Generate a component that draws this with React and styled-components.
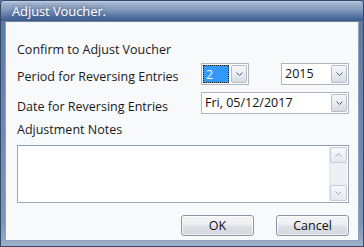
import React from "react";
import styled, { createGlobalStyle } from "styled-components";

const Global = createGlobalStyle`
  html, body { margin: 0; padding: 0; background: #5a76a0; }
  body { font-family: "Open Sans", "Noto Sans", sans-serif; }
`;

const Window = styled.div`
  width: 364px;
  height: 247px;
  display: flex;
  flex-direction: column;
  box-sizing: border-box;
  background: linear-gradient(to right, #3f5d8c 0%, #5a78a6 3%, #6f8bb4 50%, #5a78a6 97%, #3f5d8c 100%);
  border: 1px solid #34496b;
  border-radius: 4px 4px 0 0;
  overflow: hidden;
`;

const TitleBar = styled.div`
  height: 20px;
  flex: none;
  display: flex;
  align-items: center;
  padding-left: 11px;
  background: linear-gradient(to bottom, #c6d2e3 0px, #a3b4ce 2px, #8299bd 9px, #52709f 16px, #3d5c8e 20px);
  color: #ffffff;
  font-size: 13px;
  letter-spacing: -0.1px;
  text-shadow: 0 0 4px rgba(30, 50, 90, 0.8);
`;

const Frame = styled.div`
  flex: 1;
  display: flex;
  padding: 0 4px 5px 4px;
  background: linear-gradient(to bottom, #5d7aa6 0%, #7c95ba 90%, #9fb0c8 100%);
`;

const Client = styled.div`
  flex: 1;
  background: #f7f9fb;
  border: 1px solid #8fa1bb;
  border-top-color: #6c84a8;
  display: flex;
  flex-direction: column;
  padding: 19px 9px 0 10px;
  color: #1a1a1a;
  font-size: 12.5px;
`;

const Row = styled.div`
  display: grid;
  grid-template-columns: 184px 1fr;
  align-items: start;
  margin-top: ${(p) => p.$mt || 0}px;
  padding-left: 1px;
`;

const Label = styled.div`
  line-height: 16px;
  height: 16px;
  margin-top: ${(p) => p.$mt || 0}px;
  white-space: nowrap;
`;

const Controls = styled.div`
  display: flex;
  gap: 32px;
`;

const Select = styled.div`
  width: ${(p) => p.$w}px;
  height: 22px;
  box-sizing: border-box;
  border: 1px solid #aeb6c2;
  background: #ffffff;
  display: flex;
  align-items: center;
  padding: 1px;
  gap: 1px;
`;

const Value = styled.div`
  flex: 1;
  height: 18px;
  line-height: 18px;
  padding-left: 2px;
  font-size: 12.5px;
  color: #111;
  white-space: nowrap;
  overflow: hidden;
`;

const Highlight = styled.div`
  flex: 1;
  height: 18px;
  line-height: 17px;
  box-sizing: border-box;
  background: #3399ff;
  color: #ffffff;
  border: 1px dotted #202020;
  padding-left: 2px;
  margin-right: 1px;
  font-size: 12.5px;
`;

const DropButton = styled.div`
  width: 16px;
  height: 18px;
  box-sizing: border-box;
  border: 1px solid #b4bdc9;
  border-radius: 2px;
  background: linear-gradient(to bottom, #f5f7f9 0%, #e8ecf1 50%, #d5dbe3 100%);
  display: flex;
  align-items: center;
  justify-content: center;
  flex: none;
`;

const Chevron = ({ up, color = "#4e5866" }) => (
  <svg width="7" height="4" viewBox="0 0 7 4">
    <polyline
      points={up ? "0.5,3.5 3.5,0.5 6.5,3.5" : "0.5,0.5 3.5,3.5 6.5,0.5"}
      fill="none"
      stroke={color}
      strokeWidth="1"
    />
  </svg>
);

const Notes = styled.div`
  margin-top: 7px;
  margin-left: 1px;
  height: 58px;
  box-sizing: border-box;
  border: 1px solid #9aa8ba;
  border-top-color: #8e9cb0;
  background: #ffffff;
  display: flex;
  justify-content: flex-end;
  padding: 1px;
`;

const ScrollBar = styled.div`
  width: 17px;
  display: flex;
  flex-direction: column;
  background: #eef0f4;
  border-left: 1px solid #e4e7ec;
`;

const ScrollButton = styled.div`
  height: 16px;
  box-sizing: border-box;
  border: 1px solid #c6cdd8;
  border-radius: 2px;
  background: linear-gradient(to bottom, #f7f8fa, #e4e8ee);
  display: flex;
  align-items: center;
  justify-content: center;
`;

const Track = styled.div`
  flex: 1;
  background: #eceff3;
`;

const Footer = styled.div`
  margin-top: 12px;
  display: flex;
  justify-content: flex-end;
  gap: 22px;
`;

const Button = styled.button`
  width: 73px;
  height: 21px;
  box-sizing: border-box;
  border: 1px solid #8a97a8;
  border-radius: 3px;
  background: linear-gradient(to bottom, #f4f5f7 0%, #ebedf0 48%, #dde1e6 52%, #d2d7de 100%);
  box-shadow: inset 0 0 0 1px rgba(255, 255, 255, 0.7);
  font-family: "Open Sans", "Noto Sans", sans-serif;
  font-size: 12.5px;
  color: #111;
  padding: 0;
  line-height: 18px;
`;

export default function App() {
  return (
    <>
      <Global />
      <Window>
        <TitleBar>Adjust Voucher.</TitleBar>
        <Frame>
          <Client>
            <Row>
              <Label $mt={1}>Confirm to Adjust Voucher</Label>
            </Row>
            <Row $mt={5}>
              <Label $mt={6}>Period for Reversing Entries</Label>
              <Controls>
                <Select $w={48}>
                  <Highlight>2</Highlight>
                  <DropButton>
                    <Chevron />
                  </DropButton>
                </Select>
                <Select $w={68}>
                  <Value>2015</Value>
                  <DropButton>
                    <Chevron />
                  </DropButton>
                </Select>
              </Controls>
            </Row>
            <Row $mt={7}>
              <Label $mt={7}>Date for Reversing Entries</Label>
              <Select $w={148}>
                <Value>Fri, 05/12/2017</Value>
                <DropButton>
                  <Chevron />
                </DropButton>
              </Select>
            </Row>
            <Row $mt={7}>
              <Label>Adjustment Notes</Label>
            </Row>
            <Notes>
              <ScrollBar>
                <ScrollButton>
                  <Chevron up color="#9aa4b2" />
                </ScrollButton>
                <Track />
                <ScrollButton>
                  <Chevron color="#9aa4b2" />
                </ScrollButton>
              </ScrollBar>
            </Notes>
            <Footer>
              <Button>OK</Button>
              <Button>Cancel</Button>
            </Footer>
          </Client>
        </Frame>
      </Window>
    </>
  );
}
